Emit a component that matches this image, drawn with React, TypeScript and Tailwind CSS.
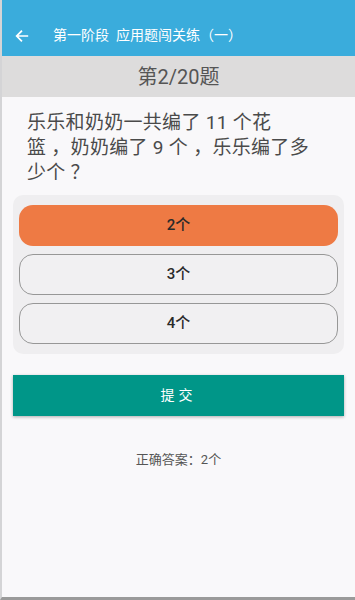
import React, { useState } from 'react';

const OPTIONS = ['2个', '3个', '4个'];

const App: React.FC = () => {
    const [selected, setSelected] = useState<number>(0);

    return (
        <div
            className="w-[355px] h-[600px] flex flex-col bg-[#f9f8fa] border-l-2 border-l-[#d4d4d6] border-b-[3px] border-b-[#9a9a9a] overflow-hidden"
            style={{ fontFamily: '"Roboto", "Noto Sans CJK SC", sans-serif' }}
        >
            <div className="h-[56px] bg-[#3aacdc] flex items-end pb-[12px] shrink-0">
                <svg className="ml-[12px] w-[16px] h-[16px]" viewBox="0 0 24 24" fill="none" stroke="#ffffff" strokeWidth="2.6" strokeLinecap="square">
                    <path d="M20 12H5M11 5l-7 7 7 7" />
                </svg>
                <span className="ml-[23px] text-[14px] leading-[18px] text-white">第一阶段&nbsp;&nbsp;应用题闯关练（一）</span>
            </div>
            <div className="h-[41px] bg-[#dddcdc] flex items-center justify-center shrink-0">
                <span className="text-[20px] text-[#555555]">第2/20题</span>
            </div>
            <p className="px-[25px] pt-[13px] text-[19px] leading-[25px] text-[#4a4a4a] tracking-[0.3px]">
                乐乐和奶奶一共编了 11 个花<br />篮 ，奶奶编了 9 个 ，乐乐编了多<br />少个 ？
            </p>
            <div className="mx-[11px] mt-[10px] bg-[#efeef0] rounded-[10px] px-[6px] py-[10px] flex flex-col gap-[8px]">
                {OPTIONS.map((opt, i) => (
                    <button
                        key={opt}
                        onClick={() => setSelected(i)}
                        className={
                            i === selected
                                ? 'h-[41px] rounded-[14px] bg-[#ee7a44] text-[15px] font-medium text-[#2a2a2a]'
                                : 'h-[41px] rounded-[14px] bg-[#f1f0f2] border-[1.5px] border-[#979797] text-[15px] font-medium text-[#2a2a2a]'
                        }
                    >
                        {opt}
                    </button>
                ))}
            </div>
            <button className="mx-[11px] mt-[21px] h-[41px] bg-[#009688] text-white text-[14px] tracking-[4px] shadow-[0_1px_3px_rgba(0,0,0,0.3)]">
                提交
            </button>
            <div className="mt-[34px] text-center text-[13px] text-[#555555]">正确答案：2个</div>
        </div>
    );
};

export default App;
